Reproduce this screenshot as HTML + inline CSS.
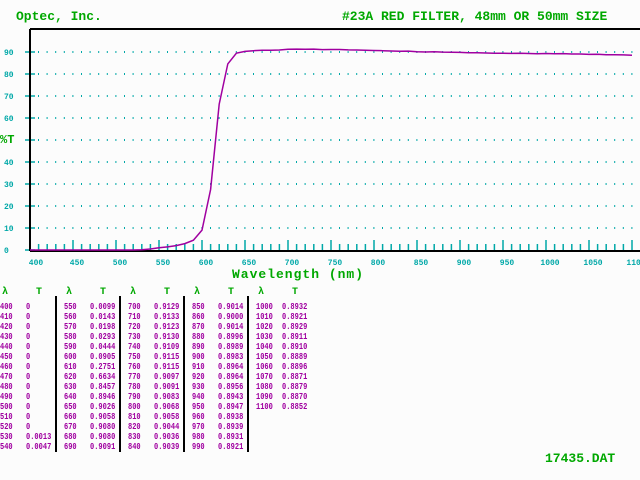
<!DOCTYPE html><html><head><style>
body{margin:0;width:640px;height:480px;background:#fcfcfc;position:relative;overflow:hidden;font-family:"Liberation Mono",monospace}
.t{position:absolute;font-weight:bold;font-size:13px;color:#00a800;white-space:pre;line-height:13px}
.c{position:absolute;top:302px;font-size:9px;color:#a000a0;white-space:pre;line-height:10px;font-weight:bold;transform:scaleX(0.78);transform-origin:0 0}
.h{position:absolute;top:287px;font-size:10px;color:#00a800;font-weight:bold}
.s{position:absolute;top:296px;width:2px;height:156px;background:#000}
</style></head><body>
<div class="t" style="left:16px;top:10px">Optec, Inc.</div>
<div class="t" style="left:342px;top:10px">#23A RED FILTER, 48mm OR 50mm SIZE</div>
<div class="t" style="left:0px;top:134px;font-size:12px">%T</div>
<div class="t" style="left:232px;top:268px;letter-spacing:1px">Wavelength (nm)</div>
<div class="t" style="left:545px;top:452px">17435.DAT</div>
<svg style="position:absolute;left:0;top:0" width="640" height="480">
<g stroke="#00a8a8" stroke-width="2" stroke-dasharray="1 7.6">
<line x1="38" y1="52" x2="640" y2="52"/><line x1="38" y1="74" x2="640" y2="74"/><line x1="38" y1="96" x2="640" y2="96"/><line x1="38" y1="118" x2="640" y2="118"/><line x1="38" y1="140" x2="640" y2="140"/><line x1="38" y1="162" x2="640" y2="162"/><line x1="38" y1="184" x2="640" y2="184"/><line x1="38" y1="206" x2="640" y2="206"/><line x1="38" y1="228" x2="640" y2="228"/>
</g>
<g stroke="#00a8a8" stroke-width="1.5">
<path d="M25 52h10M25 74h10M25 96h10M25 118h10M25 140h10M25 162h10M25 184h10M25 206h10M25 228h10M25 250h10"/>
<path id="tk" d=""/>
</g>
<g font-family="Liberation Mono,monospace" font-size="8" font-weight="bold" fill="#00a8a8">
<text x="4" y="55">90</text><text x="4" y="77">80</text><text x="4" y="99">70</text><text x="4" y="121">60</text><text x="4" y="165">40</text><text x="4" y="187">30</text><text x="4" y="209">20</text><text x="4" y="231">10</text><text x="4" y="253">0</text>
</g>
<g id="xl" font-family="Liberation Mono,monospace" font-size="8" font-weight="bold" fill="#00a8a8" text-anchor="middle"></g>
<path d="M30 29H640M30 29V251M30 251H640" stroke="#000" stroke-width="2" fill="none"/>
<polyline id="cv" fill="none" stroke="#a000a0" stroke-width="1.5"/>
</svg>
<div class="h" style="left:2px">λ</div><div class="h" style="left:36px">T</div>
<div class="h" style="left:66px">λ</div><div class="h" style="left:100px">T</div>
<div class="h" style="left:130px">λ</div><div class="h" style="left:164px">T</div>
<div class="h" style="left:194px">λ</div><div class="h" style="left:228px">T</div>
<div class="h" style="left:258px">λ</div><div class="h" style="left:292px">T</div>
<div class="s" style="left:55px"></div><div class="s" style="left:119px"></div><div class="s" style="left:183px"></div><div class="s" style="left:247px"></div>
<div class="c" style="left:0">400
410
420
430
440
450
460
470
480
490
500
510
520
530
540</div>
<div class="c" style="left:26px">0
0
0
0
0
0
0
0
0
0
0
0
0
0.0013
0.0047</div>
<div class="c" style="left:64px">550
560
570
580
590
600
610
620
630
640
650
660
670
680
690</div>
<div class="c" style="left:90px">0.0099
0.0143
0.0198
0.0293
0.0444
0.0905
0.2751
0.6634
0.8457
0.8946
0.9026
0.9058
0.9080
0.9080
0.9091</div>
<div class="c" style="left:128px">700
710
720
730
740
750
760
770
780
790
800
810
820
830
840</div>
<div class="c" style="left:154px">0.9129
0.9133
0.9123
0.9130
0.9109
0.9115
0.9115
0.9097
0.9091
0.9083
0.9068
0.9058
0.9044
0.9036
0.9039</div>
<div class="c" style="left:192px">850
860
870
880
890
900
910
920
930
940
950
960
970
980
990</div>
<div class="c" style="left:218px">0.9014
0.9000
0.9014
0.8996
0.8989
0.8983
0.8964
0.8964
0.8956
0.8943
0.8947
0.8938
0.8939
0.8931
0.8921</div>
<div class="c" style="left:256px">1000
1010
1020
1030
1040
1050
1060
1070
1080
1090
1100</div>
<div class="c" style="left:282px">0.8932
0.8921
0.8929
0.8911
0.8910
0.8889
0.8896
0.8871
0.8879
0.8870
0.8852</div>
<script>
var T=[0,0,0,0,0,0,0,0,0,0,0,0,0,.0013,.0047,.0099,.0143,.0198,.0293,.0444,.0905,.2751,.6634,.8457,.8946,.9026,.9058,.908,.908,.9091,.9129,.9133,.9123,.913,.9109,.9115,.9115,.9097,.9091,.9083,.9068,.9058,.9044,.9036,.9039,.9014,.9,.9014,.8996,.8989,.8983,.8964,.8964,.8956,.8943,.8947,.8938,.8939,.8931,.8921,.8932,.8921,.8929,.8911,.891,.8889,.8896,.8871,.8879,.887,.8852];
var p=[],d="",g=document.getElementById('xl'),s="";
for(var i=0;i<T.length;i++){var x=30+i*8.6;p.push(x.toFixed(1)+","+(250-T[i]*220).toFixed(1));
var big=(i%5==0);d+="M"+x.toFixed(1)+" "+(big?240:244)+"V251";
if(big&&i>0)s+='<text x="'+(x+4)+'" y="265">'+(400+i*10)+'</text>';}
s='<text x="36" y="265">400</text>'+s;
document.getElementById('cv').setAttribute('points',p.join(' '));
document.getElementById('tk').setAttribute('d',d);g.innerHTML=s;
</script>
</body></html>
